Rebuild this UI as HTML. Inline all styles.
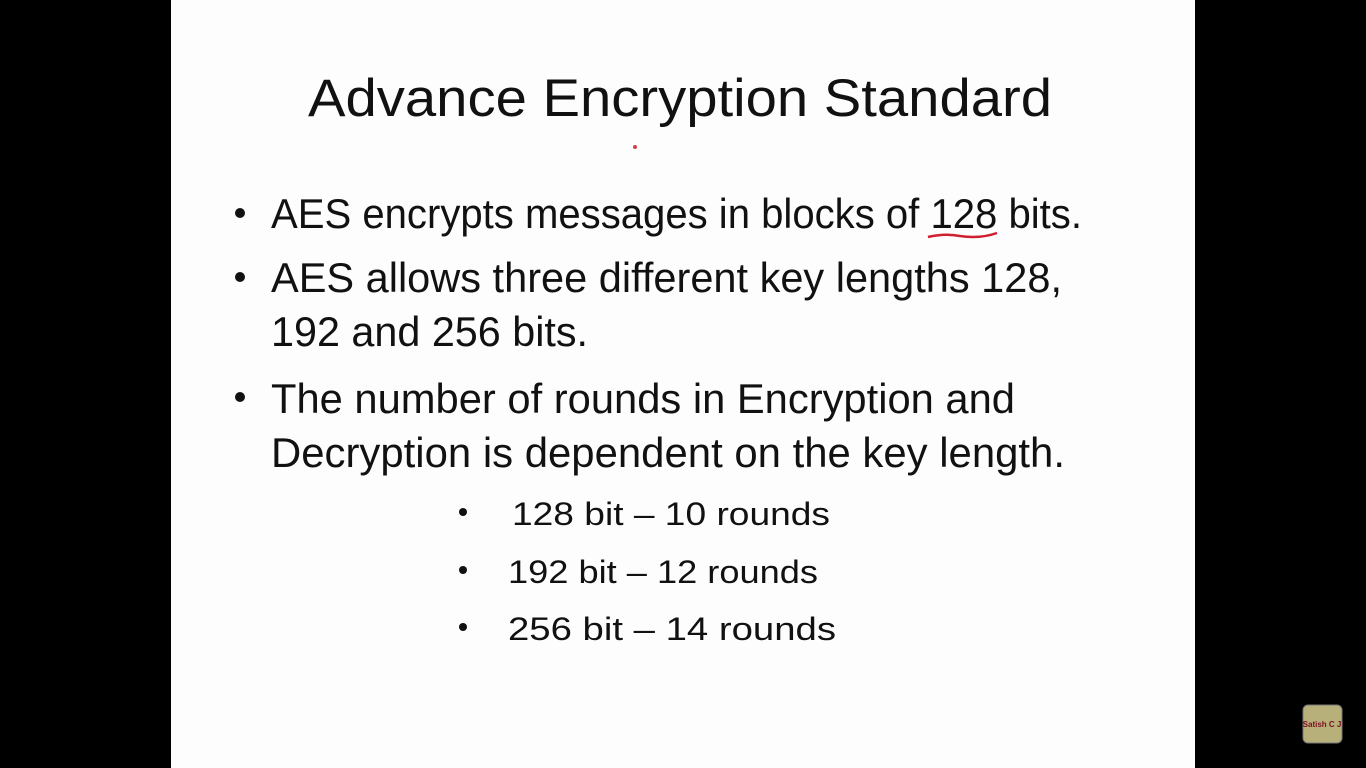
<!DOCTYPE html>
<html><head><meta charset="utf-8"><style>
html,body{margin:0;padding:0;background:#000;width:1366px;height:768px;overflow:hidden}
svg{display:block}
</style></head><body>
<svg width="1366" height="768" viewBox="0 0 1366 768" xmlns="http://www.w3.org/2000/svg">
<rect width="1366" height="768" fill="#000"/>
<rect x="171" y="0" width="1024" height="768" fill="#fdfdfd"/>
<g font-family="Liberation Sans, sans-serif" fill="#111">
<text x="308" y="116" font-size="53" textLength="744" lengthAdjust="spacingAndGlyphs">Advance Encryption Standard</text>
<text x="271" y="228" font-size="42" textLength="811" lengthAdjust="spacingAndGlyphs">AES encrypts messages in blocks of 128 bits.</text>
<text x="271" y="292" font-size="42" textLength="791" lengthAdjust="spacingAndGlyphs">AES  allows three different key lengths 128,</text>
<text x="271" y="346" font-size="42" textLength="317" lengthAdjust="spacingAndGlyphs">192 and 256 bits.</text>
<text x="271" y="413" font-size="42" textLength="744" lengthAdjust="spacingAndGlyphs">The number of rounds in Encryption and</text>
<text x="271" y="467" font-size="42" textLength="794" lengthAdjust="spacingAndGlyphs">Decryption is dependent on the key length.</text>
<text x="512" y="525" font-size="32" textLength="318" lengthAdjust="spacingAndGlyphs">128 bit  – 10 rounds</text>
<text x="508" y="583" font-size="32" textLength="310" lengthAdjust="spacingAndGlyphs">192 bit – 12 rounds</text>
<text x="508" y="640" font-size="32" textLength="328" lengthAdjust="spacingAndGlyphs">256 bit  –  14 rounds</text>
<circle cx="240" cy="213" r="5"/>
<circle cx="240" cy="277" r="5"/>
<circle cx="240" cy="397" r="5"/>
<circle cx="463" cy="512" r="4"/>
<circle cx="463" cy="570" r="4"/>
<circle cx="463" cy="627" r="4"/>
</g>
<path d="M928 237 Q945 233 960 236 Q980 239 997 233" stroke="#d02030" stroke-width="2.5" fill="none"/>
<circle cx="635" cy="147" r="2" fill="#d04050"/>
<rect x="1303" y="705" width="39" height="38" rx="5" fill="#b8b07a" stroke="#777" stroke-width="1"/>
<text x="1322" y="727" font-family="Liberation Sans, sans-serif" font-size="8" font-weight="bold" fill="#7a1020" text-anchor="middle">Satish C J</text>
</svg>
</body></html>
